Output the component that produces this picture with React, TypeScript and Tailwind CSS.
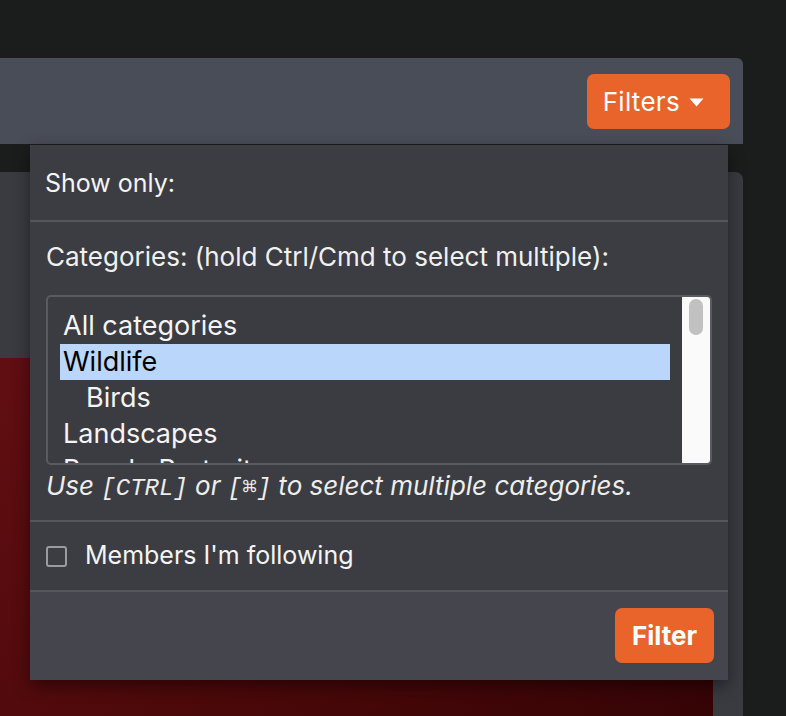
import React from 'react';

const categories = [
  { label: 'All categories', indent: false, selected: false },
  { label: 'Wildlife', indent: false, selected: true },
  { label: 'Birds', indent: true, selected: false },
  { label: 'Landscapes', indent: false, selected: false },
  { label: 'People Portraits', indent: false, selected: false },
];

const Caret = () => (
  <svg width="15" height="9" viewBox="0 0 15 9" className="ml-[9px] mt-[2px]">
    <path d="M0.5 0.5 L14.5 0.5 L7.5 8.5 Z" fill="#ffffff" />
  </svg>
);

export default function App() {
  return (
    <div
      className="relative h-[716px] w-[786px] overflow-hidden bg-[#1b1c1c] pt-[58px] pr-[43px] text-white"
      style={{ fontFamily: 'Inter, "Noto Sans", sans-serif' }}
    >
      {/* Top bar */}
      <div className="flex h-[86px] items-start justify-end rounded-tr-[6px] bg-[#494d57] pt-[16px] pr-[13px]">
        <button className="flex h-[55px] items-center rounded-[7px] bg-[#e9642b] pl-[16px] pr-[26px] text-[26px] tracking-[0.3px] text-white">
          Filters
          <Caret />
        </button>
      </div>

      {/* Content panel */}
      <div className="mt-[28px] flex h-[544px] flex-col rounded-tr-[8px] bg-[#3a3b41] pt-[186px] pr-[30px]">
        <div className="flex-1 bg-[linear-gradient(135deg,#610e12_0%,#4a0809_55%,#360405_100%)]" />
      </div>

      {/* Dropdown */}
      <div className="absolute top-[145px] left-[30px] flex h-[535px] w-[698px] flex-col bg-[#3c3d42] shadow-[0_6px_16px_rgba(0,0,0,0.45)]">
        <div className="flex h-[77px] shrink-0 items-center border-b-2 border-[#55565b] px-[15px] pt-[2px] text-[25px] text-[#f4f4f4]">
          Show only:
        </div>

        <div className="flex h-[300px] shrink-0 flex-col border-b-2 border-[#55565b] px-[16px] pt-[20px]">
          <div className="text-[26px] leading-[30px] whitespace-nowrap text-[#f0f0f0]">
            Categories: (hold Ctrl/Cmd to select multiple):
          </div>
          <div className="mt-[23px] flex h-[170px] shrink-0 overflow-hidden rounded-[5px] border-2 border-[#5a5b60] bg-[#3b3c41]">
            <div className="flex-1 overflow-hidden pt-[11px] pl-[12px] pr-[12px]">
              {categories.map((c) => (
                <div
                  key={c.label}
                  className={`h-[36px] text-[27px] leading-[36px] whitespace-nowrap ${
                    c.selected ? 'bg-[#bad6fb] text-black' : 'text-[#f4f4f4]'
                  } ${c.indent ? 'pl-[26px]' : 'pl-[3px]'}`}
                >
                  {c.label}
                </div>
              ))}
            </div>
            <div className="w-[28px] bg-[#fafafa] px-[7px] pt-[2px]">
              <div className="h-[36px] rounded-full bg-[#c1c1c1]" />
            </div>
          </div>
          <div className="mt-[6px] text-[26px] leading-[30px] whitespace-nowrap italic text-[#ededed]">
            Use{' '}
            <span className="text-[24px]" style={{ fontFamily: '"Liberation Mono", monospace' }}>
              [CTRL]
            </span>{' '}
            or{' '}
            <span className="text-[24px]" style={{ fontFamily: '"Liberation Mono", "DejaVu Sans Mono", monospace' }}>
              [⌘]
            </span>{' '}
            to select multiple categories.
          </div>
        </div>

        <div className="flex h-[70px] shrink-0 items-center border-b-2 border-[#55565b] px-[16px]">
          <span className="h-[21px] w-[21px] rounded-[3px] border-2 border-[#9b9b9e] bg-[#3c3d42]" />
          <span className="ml-[18px] text-[25px] text-[#f4f4f4]">Members I'm following</span>
        </div>

        <div className="flex flex-1 items-start justify-end bg-[#45464d] pt-[16px] pr-[14px]">
          <button className="h-[55px] rounded-[7px] bg-[#e9642b] px-[17px] text-[26px] font-bold text-white">
            Filter
          </button>
        </div>
      </div>
    </div>
  );
}
